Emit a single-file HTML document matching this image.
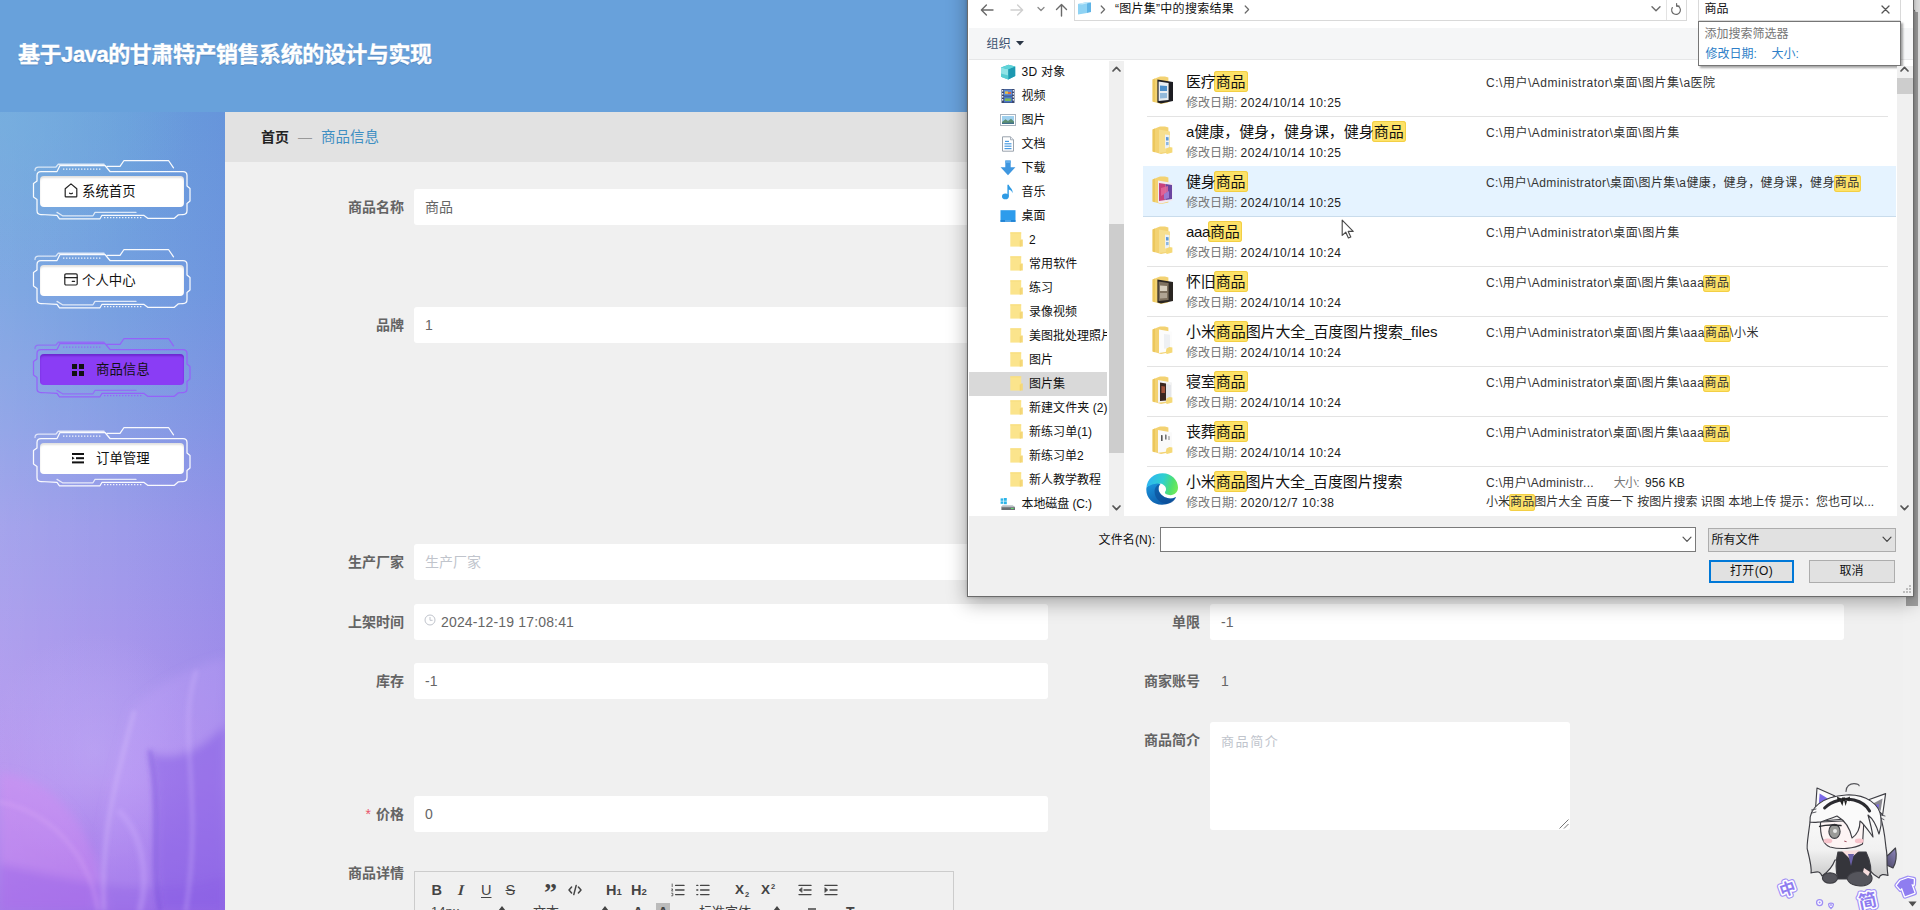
<!DOCTYPE html>
<html lang="zh-CN">
<head>
<meta charset="utf-8">
<title>基于Java的甘肃特产销售系统的设计与实现</title>
<style>
*{box-sizing:border-box;margin:0;padding:0}
html,body{width:1920px;height:910px;overflow:hidden;background:#f0f0f0}
body{position:relative;font-family:"Liberation Sans","Noto Sans CJK SC",sans-serif;font-size:14px;color:#333}
.abs{position:absolute}
/* header */
#hdr{left:0;top:0;width:1920px;height:112px;background:#68a1db}
#hdr h1{position:absolute;left:18px;top:39px;-webkit-text-stroke:0.35px #fff;font-size:22px;line-height:32px;font-weight:bold;color:#fff;white-space:nowrap;letter-spacing:-0.45px;text-shadow:0 1px 1px rgba(40,70,120,.35)}
/* sidebar */
#side{left:0;top:112px;width:225px;height:798px;overflow:hidden;
background:
 radial-gradient(ellipse 110px 120px at 95px 640px,rgba(196,184,250,.38),rgba(196,184,250,0) 100%),
 radial-gradient(ellipse 190px 170px at 0px 0px,rgba(118,178,222,.6),rgba(118,178,222,0) 100%),
 linear-gradient(90deg,rgba(255,255,255,.09),rgba(255,255,255,0) 55%,rgba(70,60,210,.10)),
 linear-gradient(180deg,#6a9fdc 0%,#74a0e0 22%,#8a9ee6 40%,#9c9bea 52%,#ab95ed 72%,#b28cee 84%,#a57cea 93%,#9b6ee6 100%)}
#silk{position:absolute;left:0;top:0;width:225px;height:798px}
.mi{position:absolute;left:33px;width:158px;height:60px}
.mi svg.fr{position:absolute;left:0;top:0;width:158px;height:60px;overflow:visible}
.mi .btn{position:absolute;left:7px;top:16px;width:144px;height:31px;border-radius:4px;background:#fff;box-shadow:inset 0 2px 2px rgba(0,0,0,.12);font-size:13.4px;line-height:31px;color:#111;white-space:nowrap}
.mi.act .btn{background:#8a3df5;box-shadow:inset 0 2px 2px rgba(60,0,140,.35)}
.mi .btn svg{position:absolute;top:7px}
.mi .btn span{position:absolute;top:0}
/* breadcrumb */
#bc{left:225px;top:112px;width:1695px;height:50px;background:#e2e2e2}
#bc span{position:absolute;top:0;line-height:50px;font-size:14px;white-space:nowrap}
/* form */
.lb{position:absolute;width:140px;text-align:right;font-size:14px;font-weight:bold;color:#646464;line-height:36px;white-space:nowrap}
.ip{position:absolute;height:36px;background:#fff;border-radius:3px;font-size:14px;line-height:36px;color:#666;padding-left:11px;white-space:nowrap}
.ph{color:#c0c4cc}
/*DLGCSS*/
#dlg{position:absolute;left:0;top:0;width:0;height:0;font-family:"Liberation Sans","Noto Sans CJK SC",sans-serif;font-size:12px;color:#000}
#dlg div,#dlg span,#dlg svg{position:absolute;white-space:nowrap}
#dlg span.t{line-height:16px;z-index:0}
#dlg .hl{position:relative;z-index:-1;background:#fde268;box-shadow:0 0 0 1px #f3cf45 inset;border-radius:3px;margin:0 -2px;padding:2px 2px 2px}
#dlg .hs{position:relative;z-index:-1;background:#fde268;box-shadow:0 0 0 1px #f3cf45 inset;border-radius:3px;margin:0 -1px;padding:1px 1px 2px}
#dlg .nm{font-size:15px;line-height:20px;color:#111}
#dlg .dl{font-size:12px;line-height:16px;color:#767676}
#dlg .dv{font-size:12px;line-height:16px;color:#1e1e1e}
#dlg .pt{font-size:12px;line-height:16px;color:#333}
#dlg .tr{font-size:12px;line-height:16px;color:#111}
#dlg .sep{height:1px;background:#e3e3e3;left:1147px;width:741px}
/*/DLGCSS*/</style>
</head>
<body>
<div id="hdr" class="abs"><h1>基于Java的甘肃特产销售系统的设计与实现</h1></div>
<div id="side" class="abs">
<!--SILK--><svg id="silk" viewBox="0 0 225 798"><defs><filter id="bl" x="-20%" y="-20%" width="140%" height="140%"><feGaussianBlur stdDeviation="5"/></filter><filter id="bl2" x="-20%" y="-20%" width="140%" height="140%"><feGaussianBlur stdDeviation="2.2"/></filter></defs>
<g filter="url(#bl)">
<path d="M0 660 C50 668 92 700 108 798 L0 798 Z" fill="rgba(212,140,244,.42)"/>
<path d="M132 596 C170 560 205 552 225 545 L225 798 L92 798 C96 740 112 660 132 596 Z" fill="rgba(196,168,250,.26)"/>
<path d="M150 640 C172 650 200 640 225 612 L225 798 L162 798 C150 750 162 700 150 640 Z" fill="rgba(118,76,222,.40)"/>
<path d="M0 752 C60 764 150 790 225 764 L225 798 L0 798 Z" fill="rgba(140,92,230,.34)"/>
</g>
<g filter="url(#bl2)" fill="none" stroke-linecap="round">
<path d="M134 600 C118 660 100 720 104 798" stroke="rgba(226,204,255,.35)" stroke-width="3"/>
<path d="M150 640 C162 700 150 750 160 798" stroke="rgba(110,70,215,.35)" stroke-width="5"/>
<path d="M196 560 C176 620 204 680 186 798" stroke="rgba(214,190,255,.30)" stroke-width="4"/>
<path d="M0 690 C50 700 88 740 98 798" stroke="rgba(230,180,250,.30)" stroke-width="3"/>
<path d="M120 700 C140 720 150 760 140 798" stroke="rgba(206,176,252,.35)" stroke-width="6"/>
</g></svg>
<!--/SILK-->
<!--SIDE-->
<div class="mi" style="top:48px"><svg class="fr" viewBox="0 0 158 60" fill="none" stroke="rgba(255,255,255,.95)" stroke-width="1.25" stroke-linejoin="round" stroke-linecap="round">
<path d="M8 11.5 L24 11.5 L27 5.5 L72 5.5 L77 11.5 L150 11.5 Q154 11.5 154 15.5 L154 26 L157 28.5 L157 41 L154 43.5 L154 50.5 Q154 54.5 150 54.5 L145.4 54.8 L141.4 58.3 L114.7 58.3 L110.7 55.3 L69 55.3 L67 58.8 L26.5 58.8 L24 55.3 L8 54.5 Q4 54.5 4 50.5 L4 39.5 L0.5 37 L0.5 23.5 L4 21 L4 15.5 Q4 11.5 8 11.5 Z"/>
<path d="M2 10.5 Q2 7 5.5 7 L23 7 L25.5 4 L71 4" stroke-opacity=".75"/>
<path d="M26 4.6 L71.5 4.6" stroke-opacity=".5"/>
<path d="M74 6.3 L87 6.3 L91 0.5 L135.5 0.5 L140.5 7.8"/>
<path d="M30 9 L68 9" stroke-dasharray="1.4 1.6" stroke-linecap="butt" stroke-opacity=".9"/>
<path d="M24 52.4 L29.5 55.8 L60 55.8 L62 52.4 L103 52.4" stroke-opacity=".8"/>
<path d="M71 57.6 L109 57.6" stroke-dasharray="1.4 1.6" stroke-linecap="butt" stroke-opacity=".9"/>
</svg><div class="btn"><svg style="left:24px" width="14" height="15" viewBox="0 0 14 15" fill="none" stroke="#222" stroke-width="1.2" stroke-linejoin="round" stroke-linecap="round"><path d="M1.2 5.8 L7 0.9 L12.8 5.8 L12.8 13.2 Q12.8 13.9 12.1 13.9 L1.9 13.9 Q1.2 13.9 1.2 13.2 Z"/><path d="M5.6 10.2 Q7 11.3 8.4 10.2"/></svg><span style="left:42px">系统首页</span></div></div>
<div class="mi" style="top:137px"><svg class="fr" viewBox="0 0 158 60" fill="none" stroke="rgba(255,255,255,.95)" stroke-width="1.25" stroke-linejoin="round" stroke-linecap="round">
<path d="M8 11.5 L24 11.5 L27 5.5 L72 5.5 L77 11.5 L150 11.5 Q154 11.5 154 15.5 L154 26 L157 28.5 L157 41 L154 43.5 L154 50.5 Q154 54.5 150 54.5 L145.4 54.8 L141.4 58.3 L114.7 58.3 L110.7 55.3 L69 55.3 L67 58.8 L26.5 58.8 L24 55.3 L8 54.5 Q4 54.5 4 50.5 L4 39.5 L0.5 37 L0.5 23.5 L4 21 L4 15.5 Q4 11.5 8 11.5 Z"/>
<path d="M2 10.5 Q2 7 5.5 7 L23 7 L25.5 4 L71 4" stroke-opacity=".75"/>
<path d="M26 4.6 L71.5 4.6" stroke-opacity=".5"/>
<path d="M74 6.3 L87 6.3 L91 0.5 L135.5 0.5 L140.5 7.8"/>
<path d="M30 9 L68 9" stroke-dasharray="1.4 1.6" stroke-linecap="butt" stroke-opacity=".9"/>
<path d="M24 52.4 L29.5 55.8 L60 55.8 L62 52.4 L103 52.4" stroke-opacity=".8"/>
<path d="M71 57.6 L109 57.6" stroke-dasharray="1.4 1.6" stroke-linecap="butt" stroke-opacity=".9"/>
</svg><div class="btn"><svg style="left:24px;top:8px" width="14" height="13" viewBox="0 0 14 13" fill="none" stroke="#222" stroke-width="1.2" stroke-linejoin="round" stroke-linecap="round"><rect x="0.8" y="0.8" width="12.4" height="11.2" rx="1.2"/><path d="M0.8 4.6 L13.2 4.6"/><path d="M8.2 8.3 L10.6 8.3"/></svg><span style="left:42px">个人中心</span></div></div>
<div class="mi act" style="top:226px"><svg class="fr" viewBox="0 0 158 60" fill="none" stroke="rgba(150,95,250,.95)" stroke-width="1.25" stroke-linejoin="round" stroke-linecap="round">
<path d="M8 11.5 L24 11.5 L27 5.5 L72 5.5 L77 11.5 L150 11.5 Q154 11.5 154 15.5 L154 26 L157 28.5 L157 41 L154 43.5 L154 50.5 Q154 54.5 150 54.5 L145.4 54.8 L141.4 58.3 L114.7 58.3 L110.7 55.3 L69 55.3 L67 58.8 L26.5 58.8 L24 55.3 L8 54.5 Q4 54.5 4 50.5 L4 39.5 L0.5 37 L0.5 23.5 L4 21 L4 15.5 Q4 11.5 8 11.5 Z"/>
<path d="M2 10.5 Q2 7 5.5 7 L23 7 L25.5 4 L71 4" stroke-opacity=".75"/>
<path d="M26 4.6 L71.5 4.6" stroke-opacity=".5"/>
<path d="M74 6.3 L87 6.3 L91 0.5 L135.5 0.5 L140.5 7.8"/>
<path d="M30 9 L68 9" stroke-dasharray="1.4 1.6" stroke-linecap="butt" stroke-opacity=".9"/>
<path d="M24 52.4 L29.5 55.8 L60 55.8 L62 52.4 L103 52.4" stroke-opacity=".8"/>
<path d="M71 57.6 L109 57.6" stroke-dasharray="1.4 1.6" stroke-linecap="butt" stroke-opacity=".9"/>
</svg><div class="btn"><svg style="left:32px;top:10px" width="12" height="12" viewBox="0 0 12 12" fill="#111"><rect x="0" y="0" width="5" height="5"/><rect x="7" y="0" width="5" height="5"/><rect x="0" y="7" width="5" height="5"/><rect x="7" y="7" width="5" height="5"/></svg><span style="left:56px">商品信息</span></div></div>
<div class="mi" style="top:315px"><svg class="fr" viewBox="0 0 158 60" fill="none" stroke="rgba(255,255,255,.95)" stroke-width="1.25" stroke-linejoin="round" stroke-linecap="round">
<path d="M8 11.5 L24 11.5 L27 5.5 L72 5.5 L77 11.5 L150 11.5 Q154 11.5 154 15.5 L154 26 L157 28.5 L157 41 L154 43.5 L154 50.5 Q154 54.5 150 54.5 L145.4 54.8 L141.4 58.3 L114.7 58.3 L110.7 55.3 L69 55.3 L67 58.8 L26.5 58.8 L24 55.3 L8 54.5 Q4 54.5 4 50.5 L4 39.5 L0.5 37 L0.5 23.5 L4 21 L4 15.5 Q4 11.5 8 11.5 Z"/>
<path d="M2 10.5 Q2 7 5.5 7 L23 7 L25.5 4 L71 4" stroke-opacity=".75"/>
<path d="M26 4.6 L71.5 4.6" stroke-opacity=".5"/>
<path d="M74 6.3 L87 6.3 L91 0.5 L135.5 0.5 L140.5 7.8"/>
<path d="M30 9 L68 9" stroke-dasharray="1.4 1.6" stroke-linecap="butt" stroke-opacity=".9"/>
<path d="M24 52.4 L29.5 55.8 L60 55.8 L62 52.4 L103 52.4" stroke-opacity=".8"/>
<path d="M71 57.6 L109 57.6" stroke-dasharray="1.4 1.6" stroke-linecap="butt" stroke-opacity=".9"/>
</svg><div class="btn"><svg style="left:32px;top:10px" width="12" height="11" viewBox="0 0 12 11" fill="#111"><rect x="0" y="0" width="12" height="2"/><rect x="4" y="4.2" width="8" height="2"/><rect x="0" y="8.4" width="12" height="2"/><path d="M0 3.6 L2.6 5.2 L0 6.8 Z"/></svg><span style="left:56px">订单管理</span></div></div>
<!--/SIDE-->
</div>
<div id="bc" class="abs"><span style="left:36px;font-weight:bold;color:#222">首页</span><span style="left:73px;color:#999">—</span><span style="left:96px;color:#3f8fc2;font-size:14.5px">商品信息</span></div>
<!--FORM-->
<div class="lb" style="left:264px;top:189px">商品名称</div>
<div class="ip" style="left:414px;top:189px;width:634px;">商品</div>
<div class="lb" style="left:264px;top:307px">品牌</div>
<div class="ip" style="left:414px;top:307px;width:634px;">1</div>
<div class="lb" style="left:264px;top:544px">生产厂家</div>
<div class="ip ph" style="left:414px;top:544px;width:634px;">生产厂家</div>
<div class="lb" style="left:264px;top:604px">上架时间</div>
<div class="ip" style="left:414px;top:604px;width:634px;"><svg style="position:absolute;left:10px;top:10px" width="12" height="12" viewBox="0 0 12 12" fill="none" stroke="#c0c4cc" stroke-width="1"><circle cx="6" cy="6" r="5"/><path d="M6 3 L6 6.3 L8.6 6.3"/></svg><span style="position:absolute;left:27px;letter-spacing:0.16px">2024-12-19 17:08:41</span></div>
<div class="lb" style="left:264px;top:663px">库存</div>
<div class="ip" style="left:414px;top:663px;width:634px;">-1</div>
<div class="lb" style="left:264px;top:796px"><span style="color:#e8536a;margin-right:5px;font-weight:normal">*</span>价格</div>
<div class="ip" style="left:414px;top:796px;width:634px;">0</div>
<div class="lb" style="left:264px;top:855px">商品详情</div>
<div class="lb" style="left:1060px;top:604px">单限</div>
<div class="ip" style="left:1210px;top:604px;width:634px;">-1</div>
<div class="lb" style="left:1060px;top:663px">商家账号</div>
<div class="ip" style="left:1210px;top:663px;width:200px;background:none">1</div>
<div class="lb" style="left:1060px;top:722px">商品简介</div>
<div class="ip ph" style="left:1210px;top:722px;width:360px;height:108px;line-height:39px;letter-spacing:1.6px;font-size:13px">商品简介<svg style="position:absolute;right:1px;bottom:1px" width="10" height="10" viewBox="0 0 10 10" stroke="#777" stroke-width="1" fill="none"><path d="M0.5 9.5 L9.5 0.5 M5 9.5 L9.5 5"/></svg></div>
<div class="abs" id="ed" style="left:414px;top:871px;width:540px;height:60px;border:1px solid #ccc;background:#f0f0f0;overflow:hidden;white-space:nowrap"><span style="position:absolute;left:16.5px;top:9px;line-height:18px;font-size:14px;font-weight:bold;color:#444;font-size:14.5px">B</span><span style="position:absolute;left:42.5px;top:9px;line-height:18px;font-size:14px;font-weight:bold;color:#444;font-style:italic;font-family:'Liberation Serif',serif;font-size:15px;transform:skewX(-4deg)">I</span><span style="position:absolute;left:66px;top:9px;line-height:18px;font-size:14px;font-weight:bold;color:#444;font-weight:normal;font-size:14.5px;text-decoration:underline;text-underline-offset:2px">U</span><span style="position:absolute;left:90.5px;top:9px;line-height:18px;font-size:14px;font-weight:bold;color:#444;font-weight:normal;font-size:14.5px;text-decoration:line-through">S</span><span style="position:absolute;left:129px;top:9px;line-height:18px;font-size:14px;font-weight:bold;color:#444;font-size:26px;top:12px;font-family:'Liberation Serif',serif;letter-spacing:-1px">”</span><svg style="position:absolute;left:153px;top:12px" width="14" height="12" viewBox="0 0 14 12" fill="none" stroke="#444" stroke-width="1.5" stroke-linecap="round" stroke-linejoin="round"><path d="M3.6 3 L1 6 L3.6 9 M10.4 3 L13 6 L10.4 9 M8.2 1.4 L5.8 10.6"/></svg><span style="position:absolute;left:191px;top:9px;line-height:18px;font-size:14px;font-weight:bold;color:#444;font-size:14.5px">H<span style="font-size:9.5px">1</span></span><span style="position:absolute;left:216px;top:9px;line-height:18px;font-size:14px;font-weight:bold;color:#444;font-size:14.5px">H<span style="font-size:9.5px">2</span></span><svg style="position:absolute;left:256px;top:11px" width="14" height="14" viewBox="0 0 14 14" fill="none" stroke="#444" stroke-width="1.4" stroke-linecap="round"><path d="M4.6 2.4 L13 2.4 M4.6 7 L13 7 M4.6 11.6 L13 11.6"/><path d="M1.2 1 L1.2 3.6 M0.6 6 L1.8 6 L0.6 8 L1.8 8 M0.6 10.2 L1.8 10.2 L1.8 12.8 L0.6 12.8" stroke-width=".8"/></svg><svg style="position:absolute;left:281px;top:11px" width="14" height="14" viewBox="0 0 14 14" fill="none" stroke="#444" stroke-width="1.4" stroke-linecap="round"><path d="M4.6 2.4 L13 2.4 M4.6 7 L13 7 M4.6 11.6 L13 11.6 M0.8 2.4 L1.8 2.4 M0.8 7 L1.8 7 M0.8 11.6 L1.8 11.6"/></svg><span style="position:absolute;left:320px;top:9px;line-height:18px;font-size:14px;font-weight:bold;color:#444;font-size:13.5px">X<span style="font-size:7.5px;position:relative;top:3px;left:1px">2</span></span><span style="position:absolute;left:346px;top:9px;line-height:18px;font-size:14px;font-weight:bold;color:#444;font-size:13.5px">X<span style="font-size:7.5px;position:relative;top:-5px;left:1px">2</span></span><svg style="position:absolute;left:383px;top:11px" width="14" height="14" viewBox="0 0 14 14" fill="none" stroke="#444" stroke-width="1.4" stroke-linecap="round"><path d="M1 2.4 L13 2.4 M6 7 L13 7 M1 11.6 L13 11.6"/><path d="M3.8 4.8 L1 7 L3.8 9.2 Z" fill="#444" stroke-width=".6"/></svg><svg style="position:absolute;left:409px;top:11px" width="14" height="14" viewBox="0 0 14 14" fill="none" stroke="#444" stroke-width="1.4" stroke-linecap="round"><path d="M1 2.4 L13 2.4 M6 7 L13 7 M1 11.6 L13 11.6"/><path d="M1 4.8 L3.8 7 L1 9.2 Z" fill="#444" stroke-width=".6"/></svg><span style="position:absolute;left:16px;top:31px;line-height:18px;font-size:13px;color:#444;">14px</span><span style="position:absolute;left:118px;top:31px;line-height:18px;font-size:13px;color:#444;">文本</span><span style="position:absolute;left:284px;top:31px;line-height:18px;font-size:13px;color:#444;">标准字体</span><span style="position:absolute;left:218px;top:31px;line-height:18px;font-size:13px;color:#444;font-weight:bold;font-size:14px">A</span><span style="position:absolute;left:243px;top:31px;line-height:18px;font-size:13px;color:#444;font-weight:bold;font-size:14px;background:#bbb;padding:0 2px;left:241px">A</span><span style="position:absolute;left:431px;top:31px;line-height:18px;font-size:13px;color:#444;font-weight:bold;font-size:14px">T</span><svg style="position:absolute;left:83px;top:34px" width="8" height="12" viewBox="0 0 8 12" fill="#444"><path d="M4 0 L7.6 4.6 L0.4 4.6 Z M4 12 L7.6 7.4 L0.4 7.4Z"/></svg><svg style="position:absolute;left:186px;top:34px" width="8" height="12" viewBox="0 0 8 12" fill="#444"><path d="M4 0 L7.6 4.6 L0.4 4.6 Z M4 12 L7.6 7.4 L0.4 7.4Z"/></svg><svg style="position:absolute;left:358px;top:34px" width="8" height="12" viewBox="0 0 8 12" fill="#444"><path d="M4 0 L7.6 4.6 L0.4 4.6 Z M4 12 L7.6 7.4 L0.4 7.4Z"/></svg><svg style="position:absolute;left:390px;top:36px" width="14" height="10" viewBox="0 0 14 10" stroke="#444" stroke-width="1.4"><path d="M3 1 L11 1 M1 5 L13 5"/></svg></div>
<!--/FORM-->
<!--SB-->
<div class="abs" style="left:1903px;top:0;width:17px;height:910px;background:#f1f1f1"></div>
<div class="abs" style="left:1906px;top:12px;width:12px;height:594px;background:#a3a3a3"></div>
<svg class="abs" style="left:1907px;top:6px" width="9" height="6" viewBox="0 0 9 6"><path d="M4.5 0.6 L8.6 5.4 L0.4 5.4Z" fill="#505050"/></svg>
<svg class="abs" style="left:1907.5px;top:901px" width="9" height="6" viewBox="0 0 9 6"><path d="M4.5 5.4 L8.6 0.6 L0.4 0.6Z" fill="#505050"/></svg>
<!--/SB-->
<!--DIALOG-->
<div id="dlg">
<div style="left:967px;top:-40px;width:947px;height:636.5px;background:#fff;border:1px solid #6b6b6b;box-shadow:0 5px 18px 1px rgba(0,0,0,.30),0 0 3px rgba(0,0,0,.2)"></div>
<div style="left:969px;top:27.5px;width:944px;height:32px;background:#f5f6f7;border-bottom:1px solid #e6e7e8"></div>
<div style="left:1074px;top:-6px;width:613px;height:27px;border:1px solid #d9d9d9;background:#fff"></div>
<div style="left:1666px;top:-5px;width:1px;height:25px;background:#e3e3e3"></div>
<svg style="left:980px;top:3px" width="14" height="14" viewBox="0 0 14 14" fill="none" stroke="#6a6a6a" stroke-width="1.4" stroke-linecap="round" stroke-linejoin="round"><path d="M13 7 L1.6 7 M6.4 2 L1.4 7 L6.4 12"/></svg>
<svg style="left:1010px;top:3px" width="14" height="14" viewBox="0 0 14 14" fill="none" stroke="#cfcfcf" stroke-width="1.4" stroke-linecap="round" stroke-linejoin="round"><path d="M1 7 L12.4 7 M7.6 2 L12.6 7 L7.6 12"/></svg>
<svg style="left:1037px;top:6px" width="8" height="6" viewBox="0 0 8 6" fill="none" stroke="#8a8a8a" stroke-width="1.3" stroke-linecap="round" stroke-linejoin="round"><path d="M1 1.5 L4 4.5 L7 1.5"/></svg>
<svg style="left:1055px;top:3px" width="13" height="14" viewBox="0 0 13 14" fill="none" stroke="#6a6a6a" stroke-width="1.4" stroke-linecap="round" stroke-linejoin="round"><path d="M6.5 13 L6.5 1.6 M1.5 6.4 L6.5 1.4 L11.5 6.4"/></svg>
<svg style="left:1077px;top:1px" width="15" height="14" viewBox="0 0 15 14"><path d="M1 3 L10 1 L10 12 L1 13.6 Z" fill="#8fd3f4"/><path d="M10 1 L14 1.6 L14 11 L10 12 Z" fill="#5fb4e6"/><path d="M1 3 L10 1 L14 1.6 L5 3.4 Z" fill="#c7ebfb"/></svg>
<svg style="left:1100px;top:5px" width="6" height="9" viewBox="0 0 6 9" fill="none" stroke="#6a6a6a" stroke-width="1.2" stroke-linecap="round" stroke-linejoin="round"><path d="M1.2 1 L4.6 4.5 L1.2 8"/></svg>
<svg style="left:1244px;top:5px" width="6" height="9" viewBox="0 0 6 9" fill="none" stroke="#6a6a6a" stroke-width="1.2" stroke-linecap="round" stroke-linejoin="round"><path d="M1.2 1 L4.6 4.5 L1.2 8"/></svg>
<svg style="left:1651px;top:5px" width="10" height="8" viewBox="0 0 10 8" fill="none" stroke="#6a6a6a" stroke-width="1.4" stroke-linecap="round" stroke-linejoin="round"><path d="M1 1.8 L5 5.8 L9 1.8"/></svg>
<svg style="left:1670px;top:3px" width="12" height="13" viewBox="0 0 12 13" fill="none" stroke="#6a6a6a" stroke-width="1.2" stroke-linecap="round" stroke-linejoin="round"><path d="M6.5 2.6 A4.4 4.4 0 1 1 2.3 4.6"/><path d="M6.6 0.6 L6.6 3.2 L9.2 3.2" /></svg>
<div style="left:1698px;top:-6px;width:203px;height:27px;border:1px solid #d9d9d9;background:#fff"></div>
<svg style="left:1881px;top:5px" width="9" height="9" viewBox="0 0 9 9" fill="none" stroke="#555" stroke-width="1.3" stroke-linecap="round"><path d="M1 1 L8 8 M8 1 L1 8"/></svg>
<div style="left:1698px;top:20.5px;width:202.5px;height:45px;border:1px solid #767676;background:#fff;box-shadow:2px 2px 2px rgba(0,0,0,.35)"></div>
<svg style="left:1016px;top:41px" width="8" height="5" viewBox="0 0 8 5"><path d="M0 0 L8 0 L4 4.4 Z" fill="#2a3646"/></svg>
<div style="left:969px;top:372px;width:138px;height:24px;background:#d9d9d9"></div>
<div style="left:1108.5px;top:60.5px;width:15px;height:455px;background:#f0f0f0"></div>
<div style="left:1108.5px;top:224px;width:15px;height:229px;background:#cdcdcd"></div>
<svg style="left:1111.5px;top:66px" width="9" height="6" viewBox="0 0 9 6" fill="none" stroke="#555" stroke-width="1.7" stroke-linecap="round" stroke-linejoin="round"><path d="M1 5 L4.5 1.3 L8 5"/></svg>
<svg style="left:1111.5px;top:505px" width="9" height="6" viewBox="0 0 9 6" fill="none" stroke="#555" stroke-width="1.7" stroke-linecap="round" stroke-linejoin="round"><path d="M1 1 L4.5 4.7 L8 1"/></svg>
<div style="left:1896.5px;top:65.5px;width:16px;height:450px;background:#f0f0f0"></div>
<div style="left:1896.5px;top:77.5px;width:16px;height:16.5px;background:#cdcdcd"></div>
<svg style="left:1900px;top:66px" width="9" height="6" viewBox="0 0 9 6" fill="none" stroke="#555" stroke-width="1.7" stroke-linecap="round" stroke-linejoin="round"><path d="M1 5 L4.5 1.3 L8 5"/></svg>
<svg style="left:1900px;top:505px" width="9" height="6" viewBox="0 0 9 6" fill="none" stroke="#555" stroke-width="1.7" stroke-linecap="round" stroke-linejoin="round"><path d="M1 1 L4.5 4.7 L8 1"/></svg>
<div style="left:1143px;top:166px;width:753px;height:50.5px;background:#e5f3ff;border-bottom:1px solid #c9dcec"></div>
<div class="sep" style="top:116px"></div>
<div class="sep" style="top:266px"></div>
<div class="sep" style="top:316px"></div>
<div class="sep" style="top:366px"></div>
<div class="sep" style="top:416px"></div>
<div class="sep" style="top:466px"></div>
<div style="left:969px;top:516px;width:944px;height:80px;background:#f0f0f0"></div>
<div style="left:1160px;top:527px;width:535.5px;height:25px;border:1px solid #7a7a7a;background:#fff"></div>
<svg style="left:1681.5px;top:536px" width="10" height="7" viewBox="0 0 10 7" fill="none" stroke="#555" stroke-width="1.2" stroke-linecap="round" stroke-linejoin="round"><path d="M1 1.2 L5 5.4 L9 1.2"/></svg>
<div style="left:1707.5px;top:527.5px;width:188px;height:24px;border:1px solid #adadad;background:#e1e1e1"></div>
<svg style="left:1881.5px;top:536px" width="10" height="7" viewBox="0 0 10 7" fill="none" stroke="#444" stroke-width="1.2" stroke-linecap="round" stroke-linejoin="round"><path d="M1 1.2 L5 5.4 L9 1.2"/></svg>
<div style="left:1708.5px;top:559.5px;width:85.5px;height:23px;border:2px solid #0078d7;background:#e1e1e1"></div>
<div style="left:1808.5px;top:559.5px;width:86px;height:23px;border:1px solid #adadad;background:#e1e1e1"></div>
<svg style="left:1902px;top:584px" width="10" height="10" viewBox="0 0 10 10" fill="#bdbdbd"><rect x="7" y="1" width="2" height="2"/><rect x="4" y="4" width="2" height="2"/><rect x="7" y="4" width="2" height="2"/><rect x="1" y="7" width="2" height="2"/><rect x="4" y="7" width="2" height="2"/><rect x="7" y="7" width="2" height="2"/></svg>
<svg style="left:1340.7px;top:219.4px" width="14" height="21" viewBox="0 0 14 21"><path d="M1.2 1.2 L1.2 16.4 L4.8 13.2 L7.4 19 L9.8 18 L7.2 12.4 L12.2 12.4 Z" fill="#fff" stroke="#4a4a4a" stroke-width="1.15" stroke-linejoin="round"/></svg>
<svg style="left:1000px;top:64px" width="16" height="16" viewBox="0 0 16 16"><path d="M1 3.4 L8.5 0.8 L15.2 2.6 L15.2 12 L8.3 15.4 L1 12.8 Z" fill="#35b8c8"/><path d="M1 3.4 L8.3 5.2 L8.3 15.4 L1 12.8 Z" fill="#8fe3e6"/><path d="M8.3 5.2 L15.2 2.6 L15.2 12 L8.3 15.4 Z" fill="#1d98b0"/><path d="M1 3.4 L8.5 0.8 L15.2 2.6 L8.3 5.2 Z" fill="#5fd3d8"/><path d="M1 9.6 L8.3 11.6 L8.3 15.4 L1 12.8 Z" fill="#3fc3c9" opacity=".7"/></svg>
<svg style="left:1000px;top:88px" width="16" height="16" viewBox="0 0 16 16"><rect x="1.5" y="1" width="13" height="14" fill="#3b4a72"/><rect x="4" y="1.6" width="8" height="6" fill="#5b8bd8"/><rect x="4" y="8.4" width="8" height="6" fill="#4a78c8"/><rect x="5" y="3.4" width="3" height="2.4" fill="#e6c34a"/><rect x="8" y="4" width="3" height="2" fill="#d86a4a"/><rect x="5" y="10.4" width="6" height="2.6" fill="#7fb85a"/><g fill="#e8ecf4"><rect x="2" y="2" width="1.3" height="1.6"/><rect x="2" y="5" width="1.3" height="1.6"/><rect x="2" y="8" width="1.3" height="1.6"/><rect x="2" y="11" width="1.3" height="1.6"/><rect x="12.7" y="2" width="1.3" height="1.6"/><rect x="12.7" y="5" width="1.3" height="1.6"/><rect x="12.7" y="8" width="1.3" height="1.6"/><rect x="12.7" y="11" width="1.3" height="1.6"/></g></svg>
<svg style="left:1000px;top:112px" width="16" height="16" viewBox="0 0 16 16"><rect x="0.5" y="2.5" width="15" height="11" fill="#fff" stroke="#a9b4c0"/><rect x="2" y="4" width="12" height="8" fill="#9fd0ee"/><path d="M2 10 L5.5 7.2 L8 9 L11 6.8 L14 9.4 L14 12 L2 12 Z" fill="#5d8f74"/><path d="M2 11 L14 10.4 L14 12 L2 12Z" fill="#3f6f8a"/></svg>
<svg style="left:1000px;top:136px" width="16" height="16" viewBox="0 0 16 16"><path d="M2.5 0.8 L10.5 0.8 L13.5 3.8 L13.5 15.2 L2.5 15.2 Z" fill="#fff" stroke="#9aa3ad" stroke-width="1"/><path d="M10.5 0.8 L10.5 3.8 L13.5 3.8" fill="#e8edf2" stroke="#9aa3ad" stroke-width=".8"/><g stroke="#4a9be0" stroke-width="1.2"><path d="M5 5.4 L9 5.4"/><path d="M4.5 7.8 L11.5 7.8"/><path d="M4.5 10.2 L11.5 10.2"/><path d="M4.5 12.6 L11.5 12.6"/></g></svg>
<svg style="left:1000px;top:160px" width="16" height="16" viewBox="0 0 16 16"><path d="M5.3 0.6 L10.7 0.6 L10.7 7.2 L15.4 7.2 L8 15.2 L0.6 7.2 L5.3 7.2 Z" fill="#3f97e0"/><path d="M5.3 0.6 L10.7 0.6 L10.7 3 L5.3 3Z" fill="#62adea"/></svg>
<svg style="left:1000px;top:184px" width="16" height="16" viewBox="0 0 16 16"><ellipse cx="5.4" cy="12.4" rx="3.4" ry="2.8" fill="#2f9be4"/><path d="M7.4 12.4 L7.4 0.8 L8.8 0.8 C9.4 3.6 13 4.6 12.6 9.2 C12 6.6 10 5.8 8.8 5.4 L8.8 12.4 Z" fill="#2f9be4"/></svg>
<svg style="left:1000px;top:208px" width="16" height="16" viewBox="0 0 16 16"><rect x="0.5" y="2.2" width="15" height="11.6" fill="#2d9cec"/><rect x="0.5" y="12.2" width="15" height="1.6" fill="#1f7fd0"/><rect x="5" y="12.6" width="6" height="0.8" fill="#8fd0ff"/></svg>
<svg style="left:1010px;top:231.6px" width="13" height="15" viewBox="0 0 13 15"><path d="M0.3 0.4 L11.2 0.4 L11.2 14.6 L0.3 14.6 Z" fill="#fbe48c"/><path d="M10.4 8.4 L11 7.6 L12.8 7.6 L12.8 14.6 L10.4 14.6 Z" fill="#f5d878"/><path d="M10.2 8.6 L10.2 14.6" stroke="#efcf68" stroke-width=".7"/><path d="M0.3 0.4 L11.2 0.4 L11.2 1.4 L0.3 1.4Z" fill="#f8dc7c"/></svg>
<svg style="left:1010px;top:255.6px" width="13" height="15" viewBox="0 0 13 15"><path d="M0.3 0.4 L11.2 0.4 L11.2 14.6 L0.3 14.6 Z" fill="#fbe48c"/><path d="M10.4 8.4 L11 7.6 L12.8 7.6 L12.8 14.6 L10.4 14.6 Z" fill="#f5d878"/><path d="M10.2 8.6 L10.2 14.6" stroke="#efcf68" stroke-width=".7"/><path d="M0.3 0.4 L11.2 0.4 L11.2 1.4 L0.3 1.4Z" fill="#f8dc7c"/></svg>
<svg style="left:1010px;top:279.6px" width="13" height="15" viewBox="0 0 13 15"><path d="M0.3 0.4 L11.2 0.4 L11.2 14.6 L0.3 14.6 Z" fill="#fbe48c"/><path d="M10.4 8.4 L11 7.6 L12.8 7.6 L12.8 14.6 L10.4 14.6 Z" fill="#f5d878"/><path d="M10.2 8.6 L10.2 14.6" stroke="#efcf68" stroke-width=".7"/><path d="M0.3 0.4 L11.2 0.4 L11.2 1.4 L0.3 1.4Z" fill="#f8dc7c"/></svg>
<svg style="left:1010px;top:303.6px" width="13" height="15" viewBox="0 0 13 15"><path d="M0.3 0.4 L11.2 0.4 L11.2 14.6 L0.3 14.6 Z" fill="#fbe48c"/><path d="M10.4 8.4 L11 7.6 L12.8 7.6 L12.8 14.6 L10.4 14.6 Z" fill="#f5d878"/><path d="M10.2 8.6 L10.2 14.6" stroke="#efcf68" stroke-width=".7"/><path d="M0.3 0.4 L11.2 0.4 L11.2 1.4 L0.3 1.4Z" fill="#f8dc7c"/></svg>
<svg style="left:1010px;top:327.6px" width="13" height="15" viewBox="0 0 13 15"><path d="M0.3 0.4 L11.2 0.4 L11.2 14.6 L0.3 14.6 Z" fill="#fbe48c"/><path d="M10.4 8.4 L11 7.6 L12.8 7.6 L12.8 14.6 L10.4 14.6 Z" fill="#f5d878"/><path d="M10.2 8.6 L10.2 14.6" stroke="#efcf68" stroke-width=".7"/><path d="M0.3 0.4 L11.2 0.4 L11.2 1.4 L0.3 1.4Z" fill="#f8dc7c"/></svg>
<svg style="left:1010px;top:351.6px" width="13" height="15" viewBox="0 0 13 15"><path d="M0.3 0.4 L11.2 0.4 L11.2 14.6 L0.3 14.6 Z" fill="#fbe48c"/><path d="M10.4 8.4 L11 7.6 L12.8 7.6 L12.8 14.6 L10.4 14.6 Z" fill="#f5d878"/><path d="M10.2 8.6 L10.2 14.6" stroke="#efcf68" stroke-width=".7"/><path d="M0.3 0.4 L11.2 0.4 L11.2 1.4 L0.3 1.4Z" fill="#f8dc7c"/></svg>
<svg style="left:1010px;top:375.6px" width="13" height="15" viewBox="0 0 13 15"><path d="M0.3 0.4 L11.2 0.4 L11.2 14.6 L0.3 14.6 Z" fill="#fbe48c"/><path d="M10.4 8.4 L11 7.6 L12.8 7.6 L12.8 14.6 L10.4 14.6 Z" fill="#f5d878"/><path d="M10.2 8.6 L10.2 14.6" stroke="#efcf68" stroke-width=".7"/><path d="M0.3 0.4 L11.2 0.4 L11.2 1.4 L0.3 1.4Z" fill="#f8dc7c"/></svg>
<svg style="left:1010px;top:399.6px" width="13" height="15" viewBox="0 0 13 15"><path d="M0.3 0.4 L11.2 0.4 L11.2 14.6 L0.3 14.6 Z" fill="#fbe48c"/><path d="M10.4 8.4 L11 7.6 L12.8 7.6 L12.8 14.6 L10.4 14.6 Z" fill="#f5d878"/><path d="M10.2 8.6 L10.2 14.6" stroke="#efcf68" stroke-width=".7"/><path d="M0.3 0.4 L11.2 0.4 L11.2 1.4 L0.3 1.4Z" fill="#f8dc7c"/></svg>
<svg style="left:1010px;top:423.6px" width="13" height="15" viewBox="0 0 13 15"><path d="M0.3 0.4 L11.2 0.4 L11.2 14.6 L0.3 14.6 Z" fill="#fbe48c"/><path d="M10.4 8.4 L11 7.6 L12.8 7.6 L12.8 14.6 L10.4 14.6 Z" fill="#f5d878"/><path d="M10.2 8.6 L10.2 14.6" stroke="#efcf68" stroke-width=".7"/><path d="M0.3 0.4 L11.2 0.4 L11.2 1.4 L0.3 1.4Z" fill="#f8dc7c"/></svg>
<svg style="left:1010px;top:447.6px" width="13" height="15" viewBox="0 0 13 15"><path d="M0.3 0.4 L11.2 0.4 L11.2 14.6 L0.3 14.6 Z" fill="#fbe48c"/><path d="M10.4 8.4 L11 7.6 L12.8 7.6 L12.8 14.6 L10.4 14.6 Z" fill="#f5d878"/><path d="M10.2 8.6 L10.2 14.6" stroke="#efcf68" stroke-width=".7"/><path d="M0.3 0.4 L11.2 0.4 L11.2 1.4 L0.3 1.4Z" fill="#f8dc7c"/></svg>
<svg style="left:1010px;top:471.6px" width="13" height="15" viewBox="0 0 13 15"><path d="M0.3 0.4 L11.2 0.4 L11.2 14.6 L0.3 14.6 Z" fill="#fbe48c"/><path d="M10.4 8.4 L11 7.6 L12.8 7.6 L12.8 14.6 L10.4 14.6 Z" fill="#f5d878"/><path d="M10.2 8.6 L10.2 14.6" stroke="#efcf68" stroke-width=".7"/><path d="M0.3 0.4 L11.2 0.4 L11.2 1.4 L0.3 1.4Z" fill="#f8dc7c"/></svg>
<svg style="left:1000px;top:496px" width="16" height="16" viewBox="0 0 16 16"><g fill="#2bb4e8"><rect x="0.6" y="2.4" width="2.6" height="2.4"/><rect x="3.8" y="2" width="3" height="2.8"/><rect x="0.6" y="5.4" width="2.6" height="2.4"/><rect x="3.8" y="5.4" width="3" height="2.8"/></g><path d="M2 10 L13.4 10 L15 11.2 L15 14 L1.4 14 L1.4 11.2 Z" fill="#6b6f73"/><path d="M2.4 9.2 L12.8 9.2 L15 11.2 L1.4 11.2Z" fill="#b9bec3"/><rect x="11" y="12" width="2.6" height="1" fill="#5fe06a"/></svg>
<svg style="left:1152px;top:76px" width="22" height="29" viewBox="0 0 22 29"><path d="M0.6 3.4 L6 1.2 L8 0.4 L13 0.4 L16.4 1.6 L16.4 26.4 L9 28 L0.6 25.6 Z" fill="#f3d272"/><path d="M0.6 3.4 L3 2.4 L3 26.2 L0.6 25.6Z" fill="#ecc75c"/><path d="M5.4 3.6 L21 6 L21 25 L9 27.6 L5.4 26.6 Z" fill="#1d1d22"/><path d="M6.6 5.6 L16.6 7 L16.6 24 L6.6 25 Z" fill="#e9eef2"/><path d="M8 9.4 L15 10 L15 15 L8 15 Z" fill="#4d8fc9"/><path d="M8 17 L15 17 L15 22 L8 22.6 Z" fill="#4d8fc9" opacity=".55"/></svg>
<svg style="left:1152px;top:126px" width="22" height="29" viewBox="0 0 22 29"><path d="M0.6 3.4 L6 1.2 L8 0.4 L13 0.4 L16.4 1.6 L16.4 26.4 L9 28 L0.6 25.6 Z" fill="#f3d272"/><path d="M0.6 3.4 L3 2.4 L3 26.2 L0.6 25.6Z" fill="#ecc75c"/><path d="M7 3.6 L18 5.6 L18 25.4 L7 27 Z" fill="#f6df8f"/><path d="M13 8.4 L17.4 9 L17.4 22 L13 22.6 Z" fill="#eef1f4"/><path d="M14 11 L16.6 11.2 L16.6 14.4 L14 14.4Z" fill="#5f9bd6"/><path d="M14 16 L16.6 16 L16.6 19 L14 19.2Z" fill="#8bb6e0"/><path d="M14.5 22.4 L17.4 21 L20.4 21.4 L20.4 26.6 L15 28 L13.6 27 Z" fill="#f5d978"/></svg>
<svg style="left:1152px;top:176px" width="22" height="29" viewBox="0 0 22 29"><path d="M0.6 3.4 L6 1.2 L8 0.4 L13 0.4 L16.4 1.6 L16.4 26.4 L9 28 L0.6 25.6 Z" fill="#f3d272"/><path d="M0.6 3.4 L3 2.4 L3 26.2 L0.6 25.6Z" fill="#ecc75c"/><path d="M6 4.6 L20.6 7 L20.6 24.6 L9 27.4 L6 26.4 Z" fill="#f1e9f2"/><path d="M7 7 L13.6 8 L13.6 24 L7 25 Z" fill="#c8417c"/><path d="M13.6 8 L20 9 L20 23 L13.6 24 Z" fill="#6a45a0"/><path d="M9 12 L16 10 L16 16 L9 20 Z" fill="#e66a9c" opacity=".8"/><path d="M12 18 L17 15 L17 22 L12 23.6 Z" fill="#9a7ad0"/></svg>
<svg style="left:1152px;top:226px" width="22" height="29" viewBox="0 0 22 29"><path d="M0.6 3.4 L6 1.2 L8 0.4 L13 0.4 L16.4 1.6 L16.4 26.4 L9 28 L0.6 25.6 Z" fill="#f3d272"/><path d="M0.6 3.4 L3 2.4 L3 26.2 L0.6 25.6Z" fill="#ecc75c"/><path d="M7 3.6 L18 5.6 L18 25.4 L7 27 Z" fill="#f6df8f"/><path d="M13 8.4 L17.4 9 L17.4 22 L13 22.6 Z" fill="#eef1f4"/><path d="M14 11 L16.6 11.2 L16.6 14.4 L14 14.4Z" fill="#5f9bd6"/><path d="M14 16 L16.6 16 L16.6 19 L14 19.2Z" fill="#8bb6e0"/><path d="M14.5 22.4 L17.4 21 L20.4 21.4 L20.4 26.6 L15 28 L13.6 27 Z" fill="#f5d978"/></svg>
<svg style="left:1152px;top:276px" width="22" height="29" viewBox="0 0 22 29"><path d="M0.6 3.4 L6 1.2 L8 0.4 L13 0.4 L16.4 1.6 L16.4 26.4 L9 28 L0.6 25.6 Z" fill="#f3d272"/><path d="M0.6 3.4 L3 2.4 L3 26.2 L0.6 25.6Z" fill="#ecc75c"/><path d="M5.4 3.6 L21 6 L21 25 L9 27.6 L5.4 26.6 Z" fill="#2a2622"/><path d="M6.6 5.6 L16.6 7 L16.6 24 L6.6 25 Z" fill="#7f7260"/><path d="M8 9.4 L15 10 L15 15 L8 15 Z" fill="#d8d0c0"/><path d="M8 17 L15 17 L15 22 L8 22.6 Z" fill="#d8d0c0" opacity=".55"/></svg>
<svg style="left:1152px;top:326px" width="22" height="29" viewBox="0 0 22 29"><path d="M0.6 3.4 L6 1.2 L8 0.4 L13 0.4 L16.4 1.6 L16.4 26.4 L9 28 L0.6 25.6 Z" fill="#f3d272"/><path d="M0.6 3.4 L3 2.4 L3 26.2 L0.6 25.6Z" fill="#ecc75c"/><path d="M7 3.6 L20 5.8 L20 25 L7 27 Z" fill="#fcfcfc"/><path d="M12 8 L18 8.8 L18 22 L12 22.8 Z" fill="#eef0f3"/><path d="M14.5 22.4 L17.4 21 L20.4 21.4 L20.4 26.6 L15 28 L13.6 27 Z" fill="#f5d978"/></svg>
<svg style="left:1152px;top:376px" width="22" height="29" viewBox="0 0 22 29"><path d="M0.6 3.4 L6 1.2 L8 0.4 L13 0.4 L16.4 1.6 L16.4 26.4 L9 28 L0.6 25.6 Z" fill="#f3d272"/><path d="M0.6 3.4 L3 2.4 L3 26.2 L0.6 25.6Z" fill="#ecc75c"/><path d="M6 4 L20 6.4 L20 25 L6 26.8 Z" fill="#f3f3f3"/><path d="M8 6.6 L14 7.6 L14 24.4 L8 25 Z" fill="#3a2620"/><path d="M9.4 10 L13 10.4 L13 17 L9.4 17Z" fill="#a0523a"/><path d="M14 8 L19 9 L19 23 L14 24 Z" fill="#e4e6ea"/><path d="M14.5 22.4 L17.4 21 L20.4 21.4 L20.4 26.6 L15 28 L13.6 27 Z" fill="#f5d978"/></svg>
<svg style="left:1152px;top:426px" width="22" height="29" viewBox="0 0 22 29"><path d="M0.6 3.4 L6 1.2 L8 0.4 L13 0.4 L16.4 1.6 L16.4 26.4 L9 28 L0.6 25.6 Z" fill="#f3d272"/><path d="M0.6 3.4 L3 2.4 L3 26.2 L0.6 25.6Z" fill="#ecc75c"/><path d="M6 4 L20 6.4 L20 25 L6 26.8 Z" fill="#fafafa"/><path d="M9 9 L10.6 9.2 L10.6 15 L9 15 Z" fill="#555"/><path d="M13 8.6 L14.6 8.8 L14.6 13.4 L13 13.4Z" fill="#777"/><path d="M16.4 10 L17.6 10.2 L17.6 14 L16.4 14Z" fill="#999"/><path d="M14.5 22.4 L17.4 21 L20.4 21.4 L20.4 26.6 L15 28 L13.6 27 Z" fill="#f5d978"/></svg>
<svg style="left:1146px;top:473px" width="32" height="32" viewBox="0 0 32 32"><defs><linearGradient id="eg1" x1="0.1" y1="0.3" x2="1" y2="0.5"><stop offset="0" stop-color="#2fb8ee"/><stop offset=".45" stop-color="#2fd0d0"/><stop offset=".8" stop-color="#4fe070"/><stop offset="1" stop-color="#6fe85a"/></linearGradient><linearGradient id="eg2" x1="0" y1="0" x2="0.6" y2="1"><stop offset="0" stop-color="#1c98e0"/><stop offset="1" stop-color="#0d5aa8"/></linearGradient></defs><path d="M0.4 15 C-0.6 24 6 31.8 16 31.8 C22 31.8 27.4 28.8 29.8 24.6 C30 24.2 29.6 24 29.2 24.2 C26.6 25.6 23.4 25.8 20.6 24.8 C15.8 23 13 19.6 12.6 16.4 C12.4 14.4 13 12 14.6 10.8 C9 8 2 11 0.4 15 Z" fill="url(#eg2)"/><path d="M8.6 18.6 C8.6 25.4 14 30.6 21 30.8 C24.6 30.8 28 28.8 29.8 24.6 C27 26.2 23.4 26 20.6 24.8 C15.8 23 12.8 19.4 12.6 16.4 C12.5 14 13.4 12 14.6 10.8 C11 11.6 8.6 14.6 8.6 18.6 Z" fill="#0c4a92" opacity=".6"/><path d="M0.4 15 C1 6 8 0.3 16.5 0.3 C26 0.3 32 7.6 32 14.6 C32 19.4 28.4 22.2 24.4 22.2 C21 22.2 18.8 20.8 18.9 19.6 C19 18.6 20.2 18 20 15.8 C19.6 12.6 16.4 10.6 13 10.6 C7.4 10.6 1.6 13 0.4 15 Z" fill="url(#eg1)"/></svg>
<span id="n0" class="t nm" style="left:1186px;top:74.1px;letter-spacing:-0.13px">医疗<span class="hl">商品</span></span>
<span id="l0" class="t dl" style="left:1186px;top:95.0px;letter-spacing:0.03px">修改日期:</span>
<span id="d0" class="t dv" style="left:1240.5px;top:95.0px;letter-spacing:0.47px">2024/10/14 10:25</span>
<span id="p0" class="t pt" style="left:1486px;top:74.7px;letter-spacing:0.52px">C:\用户\Administrator\桌面\图片集\a医院</span>
<span id="n1" class="t nm" style="left:1186px;top:124.1px;letter-spacing:-0.05px">a健康，健身，健身课，健身<span class="hl">商品</span></span>
<span id="l1" class="t dl" style="left:1186px;top:145.0px;letter-spacing:0.03px">修改日期:</span>
<span id="d1" class="t dv" style="left:1240.5px;top:145.0px;letter-spacing:0.47px">2024/10/14 10:25</span>
<span id="p1" class="t pt" style="left:1486px;top:124.7px;letter-spacing:0.53px">C:\用户\Administrator\桌面\图片集</span>
<span id="n2" class="t nm" style="left:1186px;top:174.1px;letter-spacing:-0.13px">健身<span class="hl">商品</span></span>
<span id="l2" class="t dl" style="left:1186px;top:195.0px;letter-spacing:0.03px">修改日期:</span>
<span id="d2" class="t dv" style="left:1240.5px;top:195.0px;letter-spacing:0.47px">2024/10/14 10:25</span>
<span id="p2" class="t pt" style="left:1486px;top:174.7px;letter-spacing:0.37px">C:\用户\Administrator\桌面\图片集\a健康，健身，健身课，健身<span class="hs">商品</span></span>
<span id="n3" class="t nm" style="left:1186px;top:224.1px;letter-spacing:-0.31px">aaa<span class="hl">商品</span></span>
<span id="l3" class="t dl" style="left:1186px;top:245.0px;letter-spacing:0.03px">修改日期:</span>
<span id="d3" class="t dv" style="left:1240.5px;top:245.0px;letter-spacing:0.47px">2024/10/14 10:24</span>
<span id="p3" class="t pt" style="left:1486px;top:224.7px;letter-spacing:0.53px">C:\用户\Administrator\桌面\图片集</span>
<span id="n4" class="t nm" style="left:1186px;top:274.1px;letter-spacing:-0.13px">怀旧<span class="hl">商品</span></span>
<span id="l4" class="t dl" style="left:1186px;top:295.0px;letter-spacing:0.03px">修改日期:</span>
<span id="d4" class="t dv" style="left:1240.5px;top:295.0px;letter-spacing:0.47px">2024/10/14 10:24</span>
<span id="p4" class="t pt" style="left:1486px;top:274.7px;letter-spacing:0.50px">C:\用户\Administrator\桌面\图片集\aaa<span class="hs">商品</span></span>
<span id="n5" class="t nm" style="left:1186px;top:324.1px;letter-spacing:-0.10px">小米<span class="hl">商品</span>图片大全_百度图片搜索_files</span>
<span id="l5" class="t dl" style="left:1186px;top:345.0px;letter-spacing:0.03px">修改日期:</span>
<span id="d5" class="t dv" style="left:1240.5px;top:345.0px;letter-spacing:0.47px">2024/10/14 10:24</span>
<span id="p5" class="t pt" style="left:1486px;top:324.7px;letter-spacing:0.52px">C:\用户\Administrator\桌面\图片集\aaa<span class="hs">商品</span>\小米</span>
<span id="n6" class="t nm" style="left:1186px;top:374.1px;letter-spacing:-0.13px">寝室<span class="hl">商品</span></span>
<span id="l6" class="t dl" style="left:1186px;top:395.0px;letter-spacing:0.03px">修改日期:</span>
<span id="d6" class="t dv" style="left:1240.5px;top:395.0px;letter-spacing:0.47px">2024/10/14 10:24</span>
<span id="p6" class="t pt" style="left:1486px;top:374.7px;letter-spacing:0.50px">C:\用户\Administrator\桌面\图片集\aaa<span class="hs">商品</span></span>
<span id="n7" class="t nm" style="left:1186px;top:424.1px;letter-spacing:-0.13px">丧葬<span class="hl">商品</span></span>
<span id="l7" class="t dl" style="left:1186px;top:445.0px;letter-spacing:0.03px">修改日期:</span>
<span id="d7" class="t dv" style="left:1240.5px;top:445.0px;letter-spacing:0.47px">2024/10/14 10:24</span>
<span id="p7" class="t pt" style="left:1486px;top:424.7px;letter-spacing:0.50px">C:\用户\Administrator\桌面\图片集\aaa<span class="hs">商品</span></span>
<span id="n8" class="t nm" style="left:1186px;top:474.1px;letter-spacing:-0.14px">小米<span class="hl">商品</span>图片大全_百度图片搜索</span>
<span id="l8" class="t dl" style="left:1186px;top:495.0px;letter-spacing:0.03px">修改日期:</span>
<span id="d8" class="t dv" style="left:1240.5px;top:495.0px;letter-spacing:0.48px">2020/12/7 10:38</span>
<span id="p8" class="t pt" style="left:1486px;top:474.7px;letter-spacing:0.33px">C:\用户\Administr...</span>
<span id="p8b" class="t dl" style="left:1613.7px;top:474.7px;letter-spacing:-0.68px">大小:</span>
<span id="p8c" class="t dv" style="left:1645px;top:474.7px;letter-spacing:0.10px">956 KB</span>
<span id="p8d" class="t pt" style="left:1486px;top:493.8px;letter-spacing:0.04px">小米<span class="hs">商品</span>图片大全 百度一下 按图片搜索 识图 本地上传 提示：您也可以...</span>
<span id="t0" class="t tr" style="left:1021.5px;top:64.1px;letter-spacing:0.26px">3D 对象</span>
<span id="t1" class="t tr" style="left:1021.5px;top:88.1px;letter-spacing:-0.01px">视频</span>
<span id="t2" class="t tr" style="left:1021.5px;top:112.1px">图片</span>
<span id="t3" class="t tr" style="left:1021.5px;top:136.1px">文档</span>
<span id="t4" class="t tr" style="left:1021.5px;top:160.1px">下载</span>
<span id="t5" class="t tr" style="left:1021.5px;top:184.1px">音乐</span>
<span id="t6" class="t tr" style="left:1021.5px;top:208.1px">桌面</span>
<span id="t7" class="t tr" style="left:1029px;top:232.1px">2</span>
<span id="t8" class="t tr" style="left:1029px;top:256.1px;letter-spacing:0.12px">常用软件</span>
<span id="t9" class="t tr" style="left:1029px;top:280.1px">练习</span>
<span id="t10" class="t tr" style="left:1029px;top:304.1px">录像视频</span>
<span id="t11" class="t tr" style="left:1029px;top:328.1px;width:78px;overflow:hidden">美图批处理照片</span>
<span id="t12" class="t tr" style="left:1029px;top:352.1px">图片</span>
<span id="t13" class="t tr" style="left:1029px;top:376.1px">图片集</span>
<span id="t14" class="t tr" style="left:1029px;top:400.1px;letter-spacing:0.05px">新建文件夹 (2)</span>
<span id="t15" class="t tr" style="left:1029px;top:424.1px;letter-spacing:0.05px">新练习单(1)</span>
<span id="t16" class="t tr" style="left:1029px;top:448.1px">新练习单2</span>
<span id="t17" class="t tr" style="left:1029px;top:472.1px">新人教学教程</span>
<span id="t18" class="t tr" style="left:1021.5px;top:496.1px;letter-spacing:-0.09px">本地磁盘 (C:)</span>
<span id="org" class="t tr" style="left:986.5px;top:35.5px;letter-spacing:0.24px"><span style="position:static;color:#3b5270">组织</span></span>
<span id="addr" class="t tr" style="left:1115px;top:0.5px;letter-spacing:0.27px">“图片集”中的搜索结果</span>
<span id="srch" class="t tr" style="left:1704.5px;top:1.4px;letter-spacing:-0.01px">商品</span>
<span id="flt1" class="t dl" style="left:1704.5px;top:26.0px">添加搜索筛选器</span>
<span id="flt2" class="t tr" style="left:1705.5px;top:46.0px;letter-spacing:0.03px"><span style="position:static;color:#2e7fc8">修改日期:</span></span>
<span id="flt3" class="t tr" style="left:1771.5px;top:46.0px;letter-spacing:0.05px"><span style="position:static;color:#2e7fc8">大小:</span></span>
<span id="fnl" class="t tr" style="left:1098.5px;top:531.8px;letter-spacing:0.14px">文件名(N):</span>
<span id="allf" class="t tr" style="left:1711.5px;top:531.8px">所有文件</span>
<span id="open" class="t tr" style="left:1730px;top:562.8px;letter-spacing:0.33px">打开(O)</span>
<span id="canc" class="t tr" style="left:1839.5px;top:562.8px;letter-spacing:-0.01px">取消</span>
</div>
<!--/DIALOG-->
<!--MASCOT-->
<svg class="abs" style="left:1780px;top:760px;overflow:visible" width="140" height="150" viewBox="0 0 140 150">
<defs><linearGradient id="tl" x1="0" y1="1" x2="1" y2="0"><stop offset="0" stop-color="#3b3850"/><stop offset="1" stop-color="#9088c0"/></linearGradient>
<linearGradient id="hr" x1="0" y1="0" x2="0" y2="1"><stop offset="0" stop-color="#fafafa"/><stop offset=".55" stop-color="#f1f1f1"/><stop offset="1" stop-color="#c9c9c9"/></linearGradient></defs>
<g stroke="#3e3e44" stroke-width="1.15" stroke-linejoin="round" stroke-linecap="round">
<path d="M101 100 C108 96 112 92 115.5 88 C117 96 116 103 113 108 C109 106 105 104 101 103 Z" fill="url(#tl)"/>
<path d="M37 28 L35.5 49 L55 36 Z" fill="#fbfbfb"/><path d="M39.6 33.6 L38.8 44.8 L48.2 38.8 Z" fill="#7a68e8" stroke="none"/>
<path d="M105.6 33.6 L88.6 39.8 L102.6 55 Z" fill="#fbfbfb"/><path d="M102.6 38.6 L93 43.6 L100.6 51 Z" fill="#8a8890" stroke="none"/><path d="M99 44 L94.5 45.5 L98 50 Z" fill="#7a68e8" stroke="none"/>
<path d="M30 62 C28 78 26 88 27.5 90 C30 100 32 108 31 113 C36 112 40 110 42 116 C48 112 52 108 55 100 L82 98 C86 108 92 114 99 118 C100 114 104 114 108 115.5 C106 104 108 96 106 88 C105 78 104 66 100 56 Z" fill="url(#hr)"/>
<path d="M58 92 C56 100 55 110 58 119 L90 119 C92 110 90 100 86 92 Z" fill="#35353b"/>
<path d="M62 91 L70 99 L80 90 Z" fill="#f8dede" stroke="none"/><path d="M68 94 L71 106 L74 94 Z" fill="#6a60a8" stroke="none"/>
<ellipse cx="50" cy="118" rx="7.6" ry="5.2" fill="#55555c"/><path d="M67 118 C70 110 84 110 90 114 C94 118 92 124 84 125.6 C76 127 68 124 67 118 Z" fill="#55555c"/>
<path d="M84 108 L90 112 L88 116 L83 112Z" fill="#f8dede" stroke="none"/>
<path d="M40.5 62 C40 74 42 84 50 87 C60 89.6 74 89 82.5 84 L84 60 Z" fill="#fdf4f4"/>
<ellipse cx="47.9" cy="80.9" rx="4.4" ry="2.4" fill="#f7c4cc" stroke="none"/><ellipse cx="79.2" cy="80.9" rx="4.4" ry="2.4" fill="#f7c4cc" stroke="none"/>
<ellipse cx="54.5" cy="71.4" rx="5.6" ry="7" fill="#9a9a98"/><circle cx="55" cy="71" r="2" fill="#e8e8e8" stroke="none"/>
<path d="M39.6 66.4 C46 64.6 54 64.6 61 65.6" fill="none" stroke="#2a2a2e" stroke-width="1.5"/>
<path d="M64.6 81.2 L66.2 81.6" stroke="#a05060" stroke-width="1"/>
<path d="M30 62 C29 48 42 36.6 66 35 C86 34 100 44 101 58 C102 66 100 70 99 74 C96 64 92 58 88 55 C90 62 92 70 93 77 C88 70 84 64 80 61 C80 68 78 74 72 78 C70 68 64 60 57 56 C52 58 46 60 40.5 62 C38 62 34 63 30 62 Z" fill="#fafafa"/>
<path d="M44.6 48 C52 40.6 64 38 74 40 C82 42 87 46 89.6 51" fill="none" stroke="#2b2b30" stroke-width="3"/>
<path d="M57 36.6 L62 39 L57.6 41.6 Z M70 36.6 L65 39 L69.4 41.6 Z M62 37.4 L65 37.4 L65 41 L62 41Z M60 41 L62.4 46 L63.6 41 Z M67 41 L65.6 46 L64.2 41Z" fill="#222" stroke="none"/>
<path d="M66 31.4 C66 26 70 23.6 74 23.6 C77 23.6 79 25 79.2 25.8" fill="none" stroke="#55555a" stroke-width="1.1"/>
<path d="M31.5 50 L36 49 M32 53 L36 52" fill="none" stroke="#4a4a50" stroke-width=".9"/><path d="M101 55 L105 56 M100.6 58 L104 59.6" fill="none" stroke="#4a4a50" stroke-width=".9"/>
</g>
<g font-family="'Liberation Sans','Noto Sans CJK SC',sans-serif" font-weight="bold" stroke-linejoin="round">
<g fill="#8f7df0" stroke="#9f8ff5" stroke-width="5.5"><text font-size="16" transform="translate(2,137) rotate(-20)">中</text><text font-size="18" transform="translate(80,149) rotate(-12)">简</text></g>
<g fill="#8f7df0" stroke="#fff" stroke-width="3.2" paint-order="stroke"><text font-size="16" transform="translate(2,137) rotate(-20)">中</text><text font-size="18" transform="translate(80,149) rotate(-12)">简</text></g>
</g>
<g fill="#fff" stroke="#9f8ff5" stroke-width="1.3"><circle cx="39.6" cy="142.6" r="3"/><path d="M48.6 144.4 C48.6 142.6 53.4 142.6 53.4 144.4 C53.4 146.4 51 148.6 51 148.6 C51 148.6 48.6 146.4 48.6 144.4Z"/></g><circle cx="39.6" cy="142.6" r="1" fill="#9f8ff5"/><circle cx="51" cy="145" r="0.9" fill="#9f8ff5"/>
<g transform="translate(127,127) rotate(-20)"><path d="M-9 -5 L-4 -8 L4 -8 L9 -5 L7 0 L5 -1 L5 8 L-5 8 L-5 -1 L-7 0 Z" fill="#8f7df0" stroke="#9f8ff5" stroke-width="5" stroke-linejoin="round"/><path d="M-9 -5 L-4 -8 L4 -8 L9 -5 L7 0 L5 -1 L5 8 L-5 8 L-5 -1 L-7 0 Z" fill="#8f7df0" stroke="#fff" stroke-width="2.6" paint-order="stroke" stroke-linejoin="round"/></g>
</svg>
<!--/MASCOT-->
</body>
</html>
